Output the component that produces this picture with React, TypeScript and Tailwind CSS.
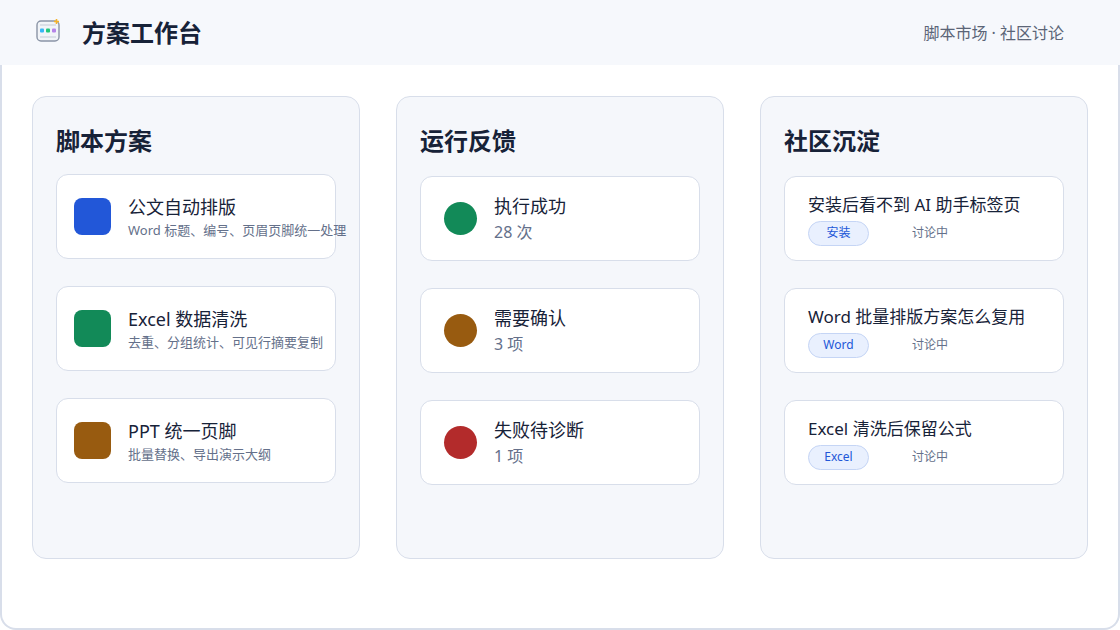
const font = 'font-["Noto_Sans","Noto_Sans_CJK_SC",sans-serif]';

const plans = [
  { color: 'bg-[#2257d8]', title: '公文自动排版', desc: 'Word 标题、编号、页眉页脚统一处理' },
  { color: 'bg-[#128a58]', title: 'Excel 数据清洗', desc: '去重、分组统计、可见行摘要复制' },
  { color: 'bg-[#985b10]', title: 'PPT 统一页脚', desc: '批量替换、导出演示大纲' },
];

const feedback = [
  { color: 'bg-[#128a58]', title: '执行成功', desc: '28 次' },
  { color: 'bg-[#985b10]', title: '需要确认', desc: '3 项' },
  { color: 'bg-[#b32b2b]', title: '失败待诊断', desc: '1 项' },
];

const topics = [
  { title: '安装后看不到 AI 助手标签页', tag: '安装' },
  { title: 'Word 批量排版方案怎么复用', tag: 'Word' },
  { title: 'Excel 清洗后保留公式', tag: 'Excel' },
];

function AppIcon() {
  return (
    <svg width="26" height="26" viewBox="0 0 26 26" fill="none">
      <rect x="1" y="3" width="22" height="20" rx="4" fill="#f1f4f8" stroke="#8a94a6" strokeWidth="1.4" />
      <path d="M4 7h16M4 19h16" stroke="#c3cad6" strokeWidth="1" />
      <rect x="4" y="10.5" width="4" height="4" rx="1" fill="#38b6f5" />
      <rect x="10" y="10.5" width="4" height="4" rx="1" fill="#22c77a" />
      <rect x="16" y="10.5" width="4" height="4" rx="1" fill="#b583e8" />
      <path d="M20.5 1v5M18 3.5h5" stroke="#f5b32a" strokeWidth="1.6" />
    </svg>
  );
}

function Column({ title, children }: { title: string; children: React.ReactNode }) {
  return (
    <section className="h-[463px] rounded-[14px] border border-[#d8deea] bg-[#f5f7fb] px-[23px] pt-[27px]">
      <h2 className="text-[24px] leading-[34px] font-bold text-[#172238]">{title}</h2>
      {children}
    </section>
  );
}

export default function App() {
  return (
    <div className={`h-[630px] w-[1120px] overflow-hidden bg-white ${font}`}>
      <div className="flex h-[630px] flex-col rounded-b-[16px] border-x-2 border-b-2 border-[#d8deea]">
        <header className="-mx-[2px] flex h-[65px] shrink-0 items-center justify-between bg-[#f6f8fc] pr-[56px] pl-[36px]">
          <div className="flex items-center gap-[20px]">
            <div className="-mt-[4px]">
              <AppIcon />
            </div>
            <h1 className="text-[24px] font-bold text-[#172238]">方案工作台</h1>
          </div>
          <span className="text-[16px] text-[#5b6577]">脚本市场 · 社区讨论</span>
        </header>

        <main className="grid grid-cols-3 gap-[36px] px-[30px] pt-[31px]">
          <Column title="脚本方案">
            <div className="mt-[16px] flex flex-col gap-[27px]">
              {plans.map((p) => (
                <div key={p.title} className="flex h-[85px] items-center gap-[17px] rounded-[12px] border border-[#d8deea] bg-white pl-[17px]">
                  <div className={`h-[37px] w-[37px] shrink-0 rounded-[8px] ${p.color}`} />
                  <div className="min-w-0 whitespace-nowrap">
                    <div className="text-[18px] leading-[26px] text-[#172238]">{p.title}</div>
                    <div className="text-[13px] leading-[20px] text-[#64708a]">{p.desc}</div>
                  </div>
                </div>
              ))}
            </div>
          </Column>

          <Column title="运行反馈">
            <div className="mt-[18px] flex flex-col gap-[27px]">
              {feedback.map((f) => (
                <div key={f.title} className="flex h-[85px] items-center gap-[17px] rounded-[12px] border border-[#d8deea] bg-white pl-[23px]">
                  <div className={`h-[33px] w-[33px] shrink-0 rounded-full ${f.color}`} />
                  <div>
                    <div className="text-[18px] leading-[26px] text-[#172238]">{f.title}</div>
                    <div className="text-[16px] leading-[26px] text-[#64708a]">{f.desc}</div>
                  </div>
                </div>
              ))}
            </div>
          </Column>

          <Column title="社区沉淀">
            <div className="mt-[18px] flex flex-col gap-[27px]">
              {topics.map((t) => (
                <div key={t.title} className="flex h-[85px] flex-col justify-center rounded-[12px] border border-[#d8deea] bg-white pl-[23px]">
                  <div className="text-[17px] leading-[26px] text-[#172238]">{t.title}</div>
                  <div className="mt-[3px] flex items-center">
                    <span className="flex h-[25px] w-[61px] items-center justify-center rounded-full border border-[#c5d5f5] bg-[#e9f0fe] text-[12px] text-[#2257d8]">{t.tag}</span>
                    <span className="ml-[43px] text-[12px] text-[#64708a]">讨论中</span>
                  </div>
                </div>
              ))}
            </div>
          </Column>
        </main>
      </div>
    </div>
  );
}
